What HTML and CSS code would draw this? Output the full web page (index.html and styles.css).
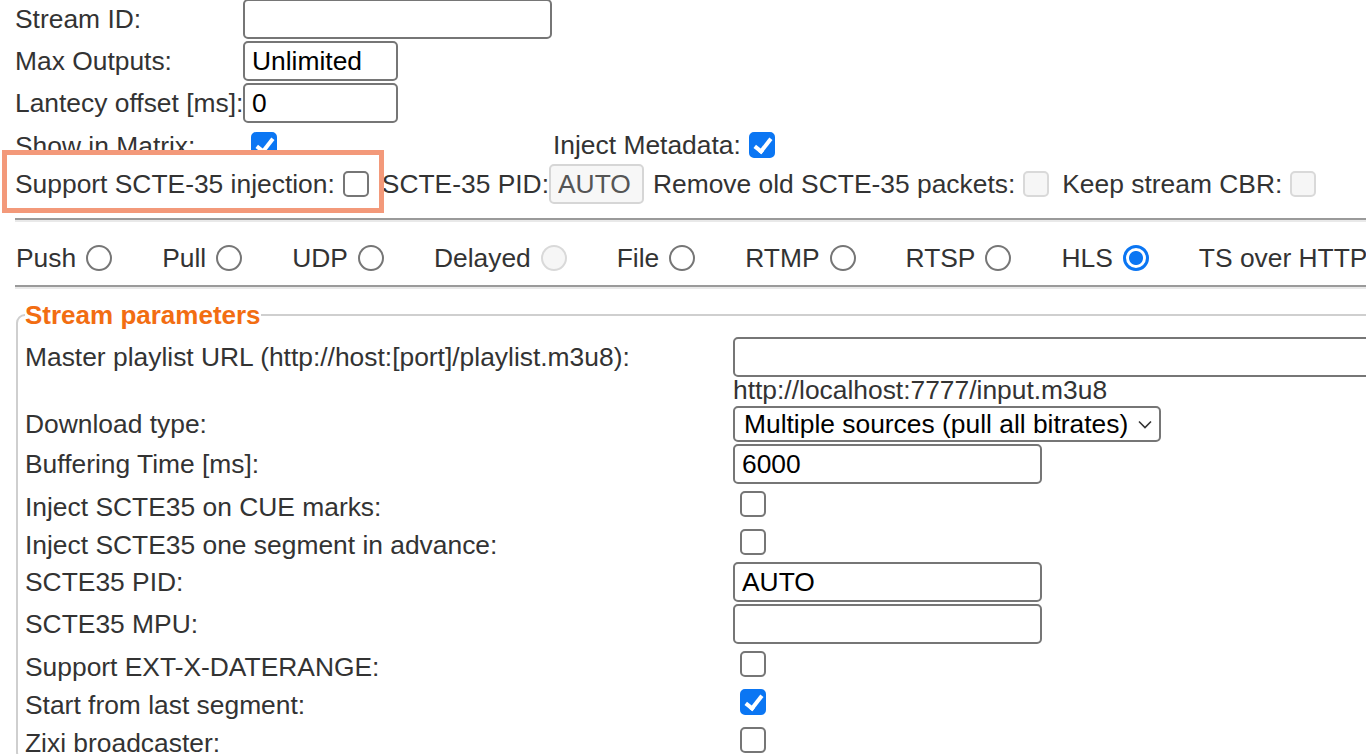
FILE: index.html
```html
<!DOCTYPE html>
<html lang="en">
<head>
<meta charset="utf-8">
<title>Stream settings</title>
<link rel="stylesheet" href="styles.css">
</head>
<body>
<div class="page">
  <div class="grid">
    <label class="lbl">Stream ID:</label>
    <div class="val"><input class="txt w-long" type="text"></div>
    <label class="lbl">Max Outputs:</label>
    <div class="val"><input class="txt w-short" type="text" value="Unlimited"></div>
    <label class="lbl">Lantecy offset [ms]:</label>
    <div class="val"><input class="txt w-short" type="text" value="0"></div>
    <label class="lbl lbl-cb">Show in Matrix:</label>
    <div class="val matrix">
      <input type="checkbox" class="cb cb-first" checked>
      <span class="inject">Inject Metadata:<input type="checkbox" class="cb" checked></span>
    </div>
  </div>

  <div class="scte-line">
    <span class="highlight">Support SCTE-35 injection:<input type="checkbox" class="cb"></span>
    <span class="gap-s">SCTE-35 PID:</span><input class="txt pid" type="text" value="AUTO" disabled>
    <span class="gap-m">Remove old SCTE-35 packets:</span><input type="checkbox" class="cb" disabled>
    <span class="gap-s">Keep stream CBR:</span><input type="checkbox" class="cb" disabled>
  </div>

  <hr class="rule">

  <div class="modes">
    <label class="mode">Push<input type="radio" name="mode" class="rd"></label>
    <label class="mode">Pull<input type="radio" name="mode" class="rd"></label>
    <label class="mode">UDP<input type="radio" name="mode" class="rd"></label>
    <label class="mode">Delayed<input type="radio" name="mode" class="rd" disabled></label>
    <label class="mode">File<input type="radio" name="mode" class="rd"></label>
    <label class="mode">RTMP<input type="radio" name="mode" class="rd"></label>
    <label class="mode">RTSP<input type="radio" name="mode" class="rd"></label>
    <label class="mode">HLS<input type="radio" name="mode" class="rd" checked></label>
    <label class="mode">TS over HTTP<input type="radio" name="mode" class="rd"></label>
  </div>

  <hr class="rule">

  <fieldset class="params">
    <legend>Stream parameters</legend>
    <div class="pgrid">
      <label class="plbl">Master playlist URL (http://host:[port]/playlist.m3u8):</label>
      <div class="pval"><input class="txt w-url" type="text"></div>

      <div class="plbl"></div>
      <div class="pval hint">http://localhost:7777/input.m3u8</div>

      <label class="plbl">Download type:</label>
      <div class="pval">
        <span class="selwrap">
          <select class="sel"><option>Multiple sources (pull all bitrates)</option></select>
          <svg class="chev" width="14" height="9" viewBox="0 0 14 9"><polyline points="1,1.5 7,7.5 13,1.5" fill="none" stroke="#333" stroke-width="1.6"/></svg>
        </span>
      </div>

      <label class="plbl">Buffering Time [ms]:</label>
      <div class="pval"><input class="txt w-long" type="text" value="6000"></div>

      <label class="plbl lc">Inject SCTE35 on CUE marks:</label>
      <div class="pval"><input type="checkbox" class="cb cb-row"></div>

      <label class="plbl lc">Inject SCTE35 one segment in advance:</label>
      <div class="pval"><input type="checkbox" class="cb cb-row"></div>

      <label class="plbl">SCTE35 PID:</label>
      <div class="pval"><input class="txt w-long" type="text" value="AUTO"></div>

      <label class="plbl">SCTE35 MPU:</label>
      <div class="pval"><input class="txt w-long" type="text"></div>

      <label class="plbl lc">Support EXT-X-DATERANGE:</label>
      <div class="pval"><input type="checkbox" class="cb cb-row"></div>

      <label class="plbl lc">Start from last segment:</label>
      <div class="pval"><input type="checkbox" class="cb cb-row" checked></div>

      <label class="plbl lc">Zixi broadcaster:</label>
      <div class="pval"><input type="checkbox" class="cb cb-row"></div>
    </div>
  </fieldset>
</div>
</body>
</html>
```

FILE: styles.css
```css
html, body {
  margin: 0;
  padding: 0;
  background: #fff;
}

body {
  width: 1366px;
  height: 754px;
  overflow: hidden;
  font-family: "Liberation Sans", Arial, Helvetica, sans-serif;
  font-size: 26.4px;
  line-height: 30px;
  color: #333;
}

.page {
  padding-left: 15px;
  margin-top: -2px;
  width: 1500px;
}

/* ---------- generic controls ---------- */
.txt {
  box-sizing: border-box;
  height: 40px;
  margin: 1px 0;
  padding: 0 7px;
  border: 2px solid #767676;
  border-radius: 5px;
  background: #fff;
  font-family: inherit;
  font-size: 26.4px;
  color: #000;
  outline: none;
}

.txt:disabled {
  border-color: #d6d6d6;
  background: #f7f7f7;
  color: #555;
}

.w-long { width: 309px; }
.w-short { width: 155px; }
.w-url { width: 720px; }
.pid { width: 95px; }

.cb {
  -webkit-appearance: none;
  appearance: none;
  box-sizing: border-box;
  position: relative;
  width: 26px;
  height: 26px;
  margin: 0 6px 0 8px;
  border: 2px solid #767676;
  border-radius: 5px;
  background: #fff;
  flex: none;
}

.cb:disabled {
  border-color: #d9d9d9;
  background: #f6f6f6;
}

.cb:checked {
  border-color: #0b76f3;
  background: #0b76f3;
}

.cb:checked::after {
  content: "";
  position: absolute;
  left: 7px;
  top: 1px;
  width: 6px;
  height: 14px;
  border-right: 4.5px solid #fff;
  border-bottom: 4.5px solid #fff;
  transform: rotate(38deg);
}

.rd {
  -webkit-appearance: none;
  appearance: none;
  box-sizing: border-box;
  width: 26px;
  height: 26px;
  margin: 0 6px 0 10px;
  border: 2px solid #767676;
  border-radius: 50%;
  background: #fff;
  flex: none;
}

.rd:disabled {
  border-color: #d9d9d9;
  background: #f6f6f6;
}

.rd:checked {
  border: 3px solid #0b76f3;
  background: radial-gradient(circle, #0b76f3 0 6.5px, #fff 7.5px);
}

/* ---------- top grid ---------- */
.grid {
  display: grid;
  grid-template-columns: 228px auto;
  align-items: center;
}

.lbl {
  white-space: nowrap;
}

.lbl-cb {
  padding-top: 4px;
}

.val {
  display: flex;
  align-items: center;
}

.matrix {
  height: 39px;
  padding-top: 2px;
  box-sizing: border-box;
}

.inject {
  display: inline-flex;
  align-items: center;
  margin-left: 270px;
}

/* ---------- SCTE line ---------- */
.scte-line {
  display: flex;
  align-items: center;
  height: 42px;
  white-space: nowrap;
}

.highlight {
  position: relative;
  z-index: 1;
  display: inline-flex;
  align-items: center;
}

.highlight::before {
  content: "";
  position: absolute;
  z-index: -1;
  left: -13px;
  right: -9px;
  top: -19px;
  bottom: -14px;
  border: 5px solid #f3997a;
  background: #fff;
}

.gap-s { margin-left: 7px; }
.gap-m { margin-left: 9px; }

/* ---------- rules ---------- */
.rule {
  height: 0;
  margin: 0;
  border: 0;
  border-top: 2px solid #9a9a9a;
  border-bottom: 2px solid #e9e9e9;
}

.scte-line + .rule {
  margin-top: 13px;
}

/* ---------- mode radios ---------- */
.modes {
  display: flex;
  align-items: center;
  gap: 44px;
  box-sizing: border-box;
  height: 63px;
  padding: 8px 0 0 1px;
  white-space: nowrap;
}

.mode {
  display: inline-flex;
  align-items: center;
}

/* ---------- fieldset ---------- */
.params {
  margin: 11px 0 0 1px;
  padding: 6px 0 0 7px;
  width: 1450px;
  border: 2px solid #cfcfcf;
  border-radius: 9px;
}

.params legend {
  padding: 0;
  font-size: 26px;
  font-weight: bold;
  color: #f26d12;
  line-height: 30px;
}

.pgrid {
  display: grid;
  grid-template-columns: 708px auto;
  align-items: center;
}

.plbl {
  white-space: nowrap;
}

.lc {
  padding-top: 6px;
}

.pval {
  display: flex;
  align-items: center;
}

.hint {
  line-height: 25px;
  height: 27px;
  align-items: flex-start;
}

.selwrap {
  position: relative;
  display: inline-block;
  margin: 1px 0;
}

.sel {
  -webkit-appearance: none;
  appearance: none;
  box-sizing: border-box;
  width: 428px;
  height: 36px;
  padding: 0 30px 0 9px;
  border: 2px solid #767676;
  border-radius: 5px;
  background: #fff;
  font-family: inherit;
  font-size: 26.4px;
  color: #000;
  display: block;
}

.chev {
  position: absolute;
  right: 9px;
  top: 14px;
  pointer-events: none;
}

.cb-row {
  margin: 6px 6px 6px 7px;
}
```
